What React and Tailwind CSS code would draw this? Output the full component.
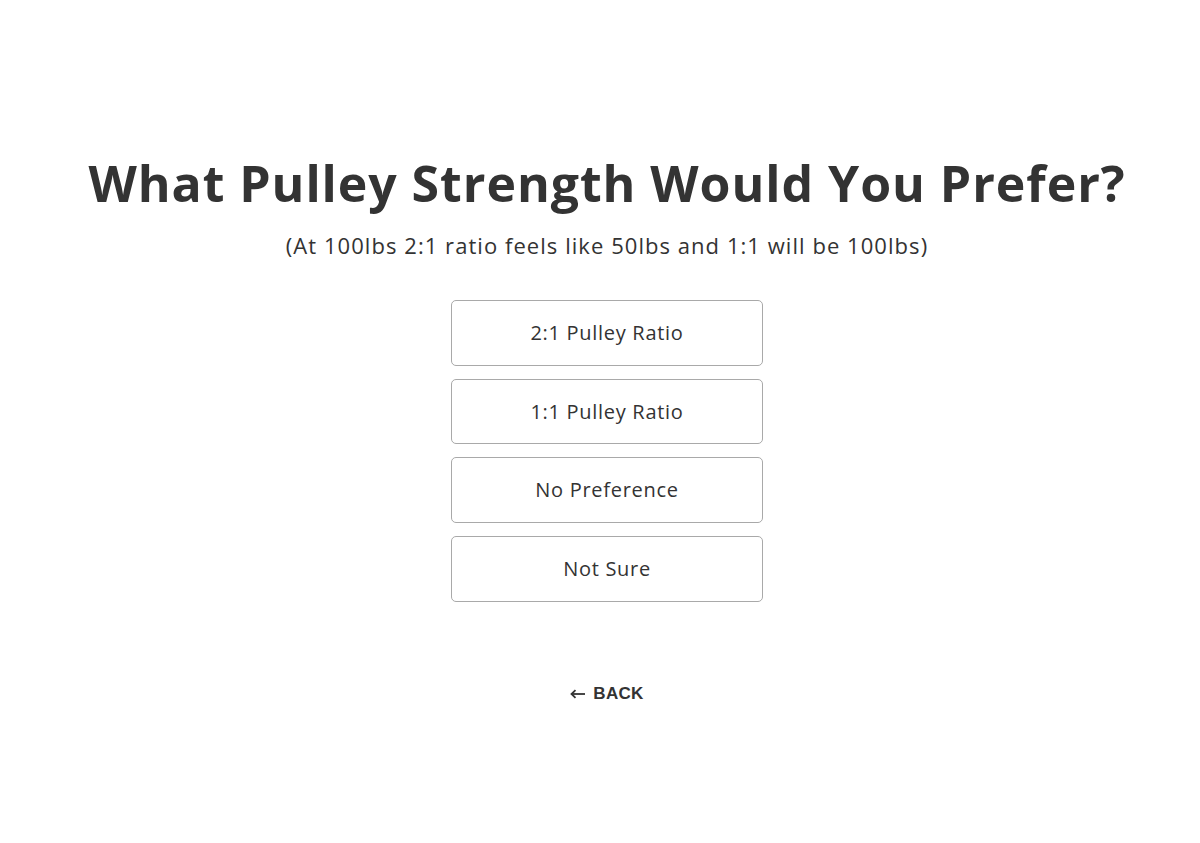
const options = ["2:1 Pulley Ratio", "1:1 Pulley Ratio", "No Preference", "Not Sure"];

export default function App() {
  return (
    <div className="min-h-screen bg-white text-[#333333] flex flex-col items-center pt-[152px] pl-[14px] font-['Open_Sans',sans-serif]">
      <h1 className="text-[50px] leading-[62px] font-bold tracking-[0.95px]">
        What Pulley Strength Would You Prefer?
      </h1>
      <p className="mt-[16px] text-[22px] leading-[30px] tracking-[1.05px]">
        (At 100lbs 2:1 ratio feels like 50lbs and 1:1 will be 100lbs)
      </p>

      <div className="mt-[40px] flex flex-col gap-[13px]">
        {options.map((label) => (
          <button
            key={label}
            className="w-[312px] h-[65.7px] border border-[#a9a9a9] rounded-[5px] bg-white text-[20px] tracking-[0.7px] text-[#333333]"
          >
            {label}
          </button>
        ))}
      </div>

      <button className="mt-[79px] flex items-center gap-[8px] text-[17px] font-bold tracking-[0.3px] font-['Liberation_Sans',sans-serif] text-[#333333]">
        <svg width="15" height="10" viewBox="0 0 15 10" fill="none" stroke="currentColor" strokeWidth="1.8">
          <path d="M15 5H2" />
          <path d="M5.5 1.2L1.5 5l4 3.8" />
        </svg>
        BACK
      </button>
    </div>
  );
}
